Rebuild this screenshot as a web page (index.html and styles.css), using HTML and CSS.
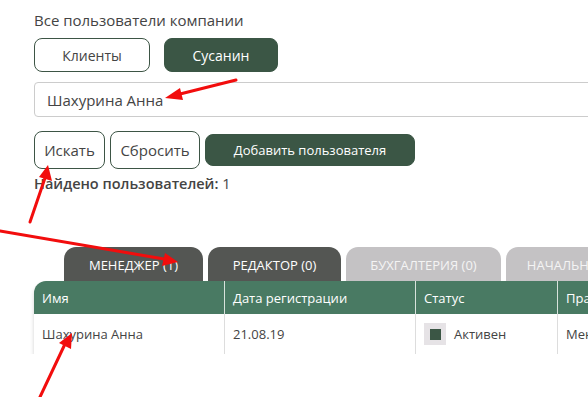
FILE: index.html
```html
<!DOCTYPE html>
<html lang="ru">
<head>
  <meta charset="UTF-8">
  <title>Пользователи компании</title>
  <link rel="stylesheet" href="styles.css">
</head>
<body>
  <div class="page">
    <div class="title">Все пользователи компании</div>

    <div class="switch">
      <button class="btn btn-outline btn-switch">Клиенты</button>
      <button class="btn btn-dark btn-switch">Сусанин</button>
    </div>

    <input class="search" type="text" value="Шахурина Анна">

    <div class="actions">
      <button class="btn btn-outline btn-search">Искать</button>
      <button class="btn btn-outline btn-reset">Сбросить</button>
      <button class="btn btn-dark btn-add">Добавить пользователя</button>
    </div>

    <div class="found"><strong>Найдено пользователей:</strong> 1</div>

    <div class="tabs">
      <div class="tab tab-active tab-1">Менеджер (1)</div>
      <div class="tab tab-active tab-2">Редактор (0)</div>
      <div class="tab tab-3">Бухгалтерия (0)</div>
      <div class="tab tab-4">Начальник (0)</div>
    </div>

    <div class="table">
      <div class="row head">
        <div class="cell c-name">Имя</div>
        <div class="cell c-date">Дата регистрации</div>
        <div class="cell c-status">Статус</div>
        <div class="cell c-rights">Права</div>
      </div>
      <div class="row">
        <div class="cell c-name">Шахурина Анна</div>
        <div class="cell c-date">21.08.19</div>
        <div class="cell c-status"><span class="check"><span></span></span>Активен</div>
        <div class="cell c-rights">Менеджер</div>
      </div>
    </div>
  </div>

  <svg class="arrows" width="588" height="397" viewBox="0 0 588 397">
    <g stroke="#f20d0d" stroke-width="3" stroke-linecap="round" fill="#f20d0d">
      <line x1="236" y1="80" x2="176" y2="95"/>
      <polygon points="165,98 180,88 183,100" stroke="none"/>
      <line x1="30" y1="222" x2="45" y2="178"/>
      <polygon points="48,165 52,181 39,177" stroke="none"/>
      <line x1="0" y1="231" x2="164" y2="259"/>
      <polygon points="178,262 162,266 165,253" stroke="none"/>
      <line x1="40" y1="397" x2="65" y2="344"/>
      <polygon points="72,333 71,349 59,343" stroke="none"/>
    </g>
  </svg>
</body>
</html>
```

FILE: styles.css
```css
body {
  margin: 0;
  font-family: 'Open Sans', sans-serif;
  color: #444;
  background: white;
  overflow: hidden;
}

.page {
  padding: 10px 0 0 34px;
  width: 700px;
}

.title {
  font-size: 15px;
  line-height: 20px;
  color: #444;
}

.btn {
  font-family: 'Open Sans', sans-serif;
  font-size: 14px;
  border-radius: 8px;
  cursor: pointer;
  padding: 0;
}

.btn-outline {
  background: white;
  border: 1px solid #3d5545;
  color: #444;
}

.btn-dark {
  background: #3b5645;
  border: 1px solid #3b5645;
  color: white;
}

.switch {
  display: flex;
  gap: 14px;
  margin-top: 8px;
}

.btn-switch {
  height: 34px;
  width: 116px;
}

.switch .btn-dark {
  width: 114px;
}

.search {
  display: block;
  box-sizing: border-box;
  margin-top: 10px;
  width: 640px;
  height: 35px;
  padding: 0 12px;
  border: 1px solid #ccc;
  border-radius: 4px;
  font-family: 'Open Sans', sans-serif;
  font-size: 15px;
  color: #444;
}

.actions {
  display: flex;
  align-items: center;
  gap: 5px;
  margin-top: 14px;
}

.btn-search {
  width: 71px;
  height: 38px;
  font-size: 15px;
}

.btn-reset {
  width: 90px;
  height: 38px;
  font-size: 15px;
}

.btn-add {
  width: 210px;
  height: 32px;
  font-size: 13px;
}

.found {
  font-size: 14.5px;
  line-height: 20px;
  margin-top: 5px;
}

.found strong {
  font-weight: 600;
}

.tabs {
  display: flex;
  gap: 5px;
  margin-top: 53px;
  padding-left: 30px;
}

.tab {
  height: 34px;
  line-height: 36px;
  text-align: center;
  text-transform: uppercase;
  font-size: 13px;
  color: white;
  background: #c4c2c4;
  border-radius: 12px 12px 0 0;
  flex-shrink: 0;
}

.tab-active {
  background: #545653;
}

.tab-1 { width: 139px; }
.tab-2 { width: 133px; }
.tab-3 { width: 155px; color: #f4f4f4; }
.tab-4 { width: 140px; color: #f4f4f4; }

.table {
  width: 640px;
  box-shadow: 0 3px 4px rgba(0, 0, 0, 0.18);
  border-radius: 12px 0 0 0;
  overflow: hidden;
}

.row {
  display: flex;
  height: 40px;
  align-items: stretch;
  background: white;
  font-size: 13px;
  color: #444;
}

.row.head {
  height: 33px;
  background: #497a63;
  color: white;
}

.cell {
  display: flex;
  align-items: center;
  padding: 0 8px;
  box-sizing: border-box;
  border-right: 1px solid #ddd;
}

.head .cell {
  border-right-color: #d8e2dc;
  padding-top: 1px;
}

.c-name { width: 191px; }
.c-date { width: 191px; }
.c-status { width: 142px; }
.c-rights { flex: 1; border-right: none; }

.check {
  display: inline-flex;
  align-items: center;
  justify-content: center;
  width: 22px;
  height: 22px;
  background: #e6e3e6;
  margin-right: 8px;
}

.check span {
  width: 11px;
  height: 11px;
  background: #3b5645;
}

.arrows {
  position: absolute;
  left: 0;
  top: 0;
  pointer-events: none;
}
```
